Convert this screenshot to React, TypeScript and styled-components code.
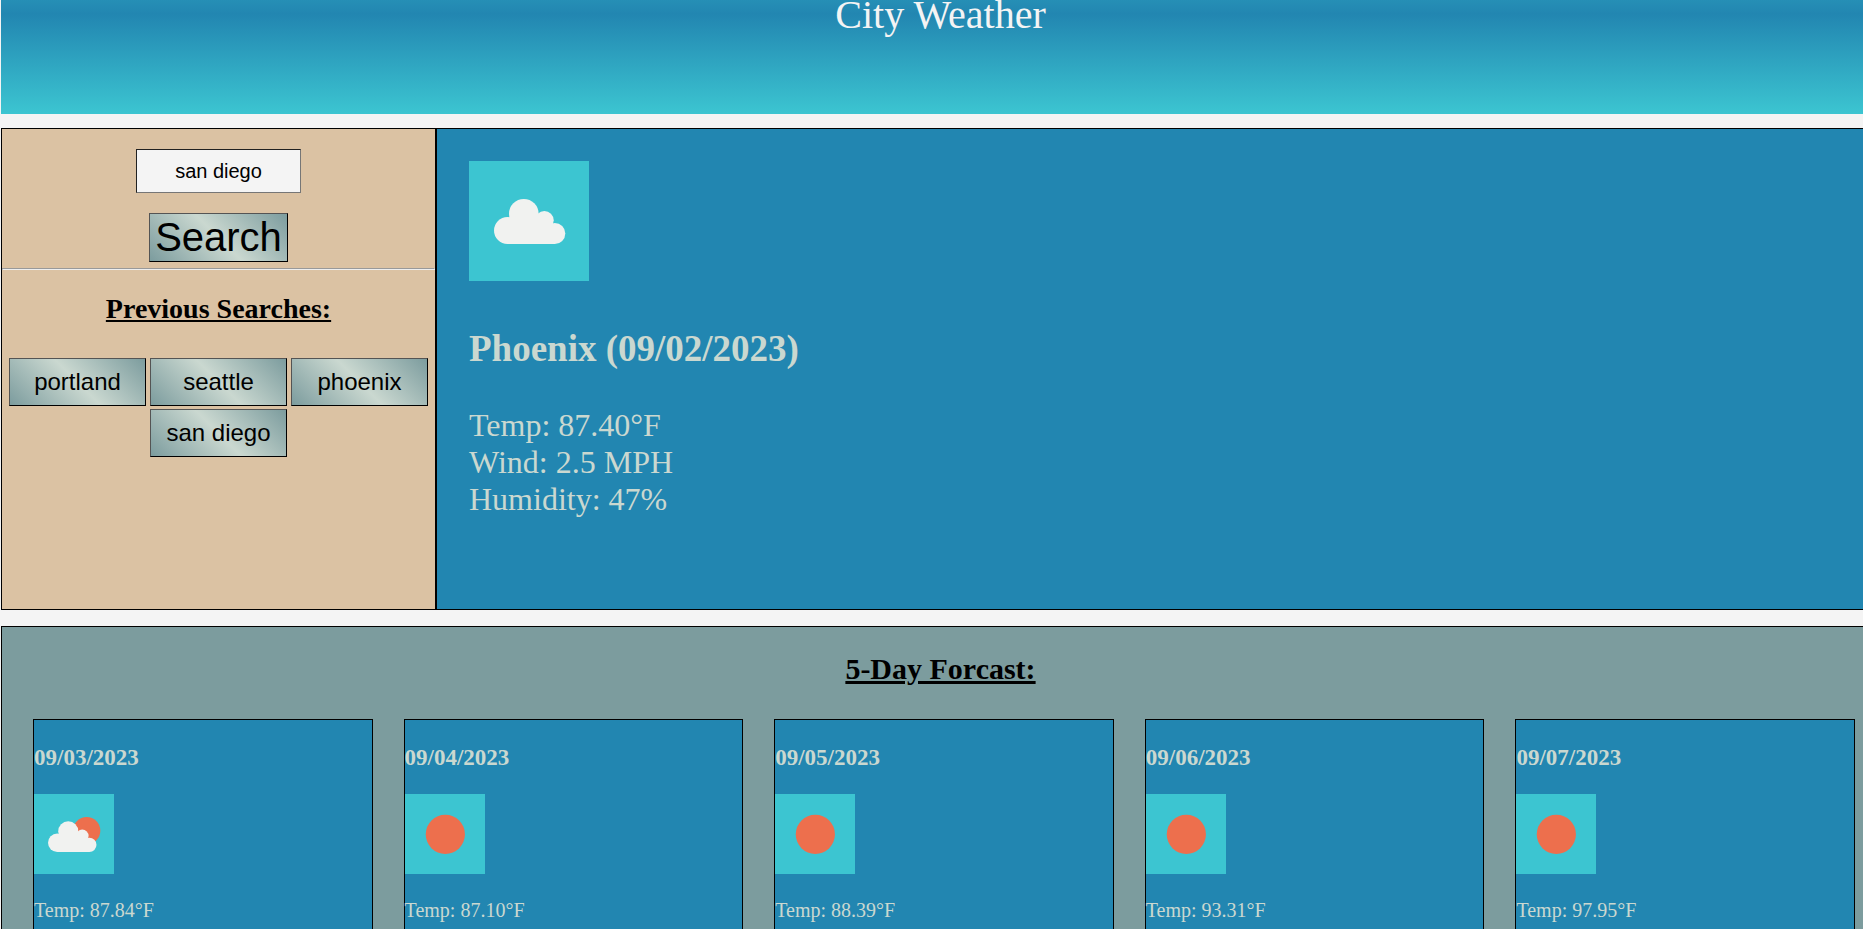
import React, { useState } from "react";
import styled, { createGlobalStyle } from "styled-components";

const color = {
  paper: "#f4f4f4",
  blue: "#2286b1",
  teal: "#3cc5d1",
  sand: "#dbc2a3",
  sage: "#7c9c9e",
  mist: "#cad8d0",
  sun: "#ed6f4d",
  cloud: "#f1f2f0",
};

const GlobalStyle = createGlobalStyle`
  body {
    margin: 0;
    background: ${color.paper};
    font-family: "Liberation Serif", "Times New Roman", serif;
  }
  *, *::before, *::after { box-sizing: border-box; }
`;

const Page = styled.div`
  height: 100vh;
  overflow: hidden;
  padding-left: 1px;
`;

/* The content is a little wider than the window. */
const Content = styled.div`
  margin-right: -17px;
  display: flex;
  flex-direction: column;
`;

const Banner = styled.header`
  display: flex;
  align-items: center;
  justify-content: center;
  height: 200px;
  margin: -86px 0 14px;
  background: linear-gradient(${color.teal}, ${color.blue}, ${color.teal});
`;

const SiteTitle = styled.h1`
  margin: 0;
  padding-top: 2px;
  font-size: 40px;
  font-weight: 400;
  line-height: 46px;
  color: ${color.paper};
`;

const Columns = styled.div`
  display: flex;
  min-height: 482px;
`;

const Sidebar = styled.aside`
  flex: 0 0 435px;
  border: 1px solid #000;
  background: ${color.sand};
`;

const SearchForm = styled.form`
  display: flex;
  flex-direction: column;
  align-items: center;
  gap: 20px;
  padding: 20px 0 6px;
`;

const CityInput = styled.input`
  width: 165px;
  height: 44px;
  padding: 0;
  border: 1px inset #767676;
  background: ${color.paper};
  font: 20px "Liberation Sans", Arial, sans-serif;
  color: #000;
  text-align: center;
`;

const Button = styled.button<{ $large?: boolean }>`
  width: ${(p) => (p.$large ? "139px" : "137px")};
  height: ${(p) => (p.$large ? 49 : 48)}px;
  padding: 0;
  border: 1px outset #000;
  background: linear-gradient(45deg, ${color.sage}, ${color.mist}, ${color.sage});
  font: ${(p) => (p.$large ? 40 : 24)}px "Liberation Sans", Arial, sans-serif;
  color: #000;
`;

const Divider = styled.hr`
  margin: 0;
  border: 1px solid;
  border-color: #999 #eee #eee #999;
`;

const SectionTitle = styled.h2<{ $size: number }>`
  margin: ${(p) => (p.$size === 28 ? "23px 0 33px" : "25px 0 33px")};
  font-size: ${(p) => p.$size}px;
  line-height: ${(p) => p.$size + 4}px;
  text-align: center;
  text-decoration: underline;
`;

const History = styled.div`
  display: flex;
  flex-wrap: wrap;
  justify-content: center;
  gap: 3px 4px;
`;

const Current = styled.main`
  flex: 1;
  padding: 32px;
  border: 1px solid #000;
  background: ${color.blue};
  color: ${color.mist};
`;

const Tile = styled.svg<{ $size: number }>`
  display: block;
  width: ${(p) => p.$size}px;
  height: ${(p) => p.$size}px;
  background: ${color.teal};
`;

const CurrentTitle = styled.h3`
  margin: 47px 0 37px;
  font-size: 37px;
  line-height: 42px;
`;

const Reading = styled.div`
  font-size: 32px;
  line-height: 37px;
`;

const Forecast = styled.section`
  display: flow-root;
  min-height: 400px;
  margin-top: 16px;
  border: 1px solid #000;
  background: ${color.sage};
`;

const Days = styled.div`
  display: flex;
  gap: 31px;
  padding: 0 24px 0 31px;
`;

const Day = styled.article`
  flex: 1;
  min-height: 300px;
  border: 1px solid #000;
  background: ${color.blue};
  color: ${color.mist};
`;

const DayDate = styled.h3`
  margin: 25px 0 23px;
  font-size: 23px;
  line-height: 26px;
`;

const DayReading = styled.p`
  margin: 25px 0;
  font-size: 20px;
  line-height: 23px;
`;

type Sky = "cloud" | "partly" | "sun";

const CloudShape = () => (
  <g fill={color.cloud}>
    <circle cx="38.5" cy="69.5" r="13.5" />
    <circle cx="54.8" cy="52.8" r="14.8" />
    <circle cx="75.4" cy="59.3" r="9.3" />
    <circle cx="85.8" cy="72.5" r="10.5" />
    <path d="M38.5 83V60L54 52L75 59L86 70V83Z" />
  </g>
);

const WeatherIcon = ({ sky, size }: { sky: Sky; size: number }) => (
  <Tile $size={size} viewBox="0 0 120 120" role="img" aria-label={sky}>
    {sky === "sun" && <circle cx="60.5" cy="60.5" r="29.4" fill={color.sun} />}
    {sky === "partly" && <circle cx="79" cy="55" r="20.5" fill={color.sun} />}
    {sky === "cloud" && <CloudShape />}
    {sky === "partly" && (
      <g transform="translate(-4.5 2.3) scale(1.02)">
        <CloudShape />
      </g>
    )}
  </Tile>
);

const cities = ["portland", "seattle", "phoenix", "san diego"];

const days: { date: string; sky: Sky; temp: string }[] = [
  { date: "09/03/2023", sky: "partly", temp: "87.84" },
  { date: "09/04/2023", sky: "sun", temp: "87.10" },
  { date: "09/05/2023", sky: "sun", temp: "88.39" },
  { date: "09/06/2023", sky: "sun", temp: "93.31" },
  { date: "09/07/2023", sky: "sun", temp: "97.95" },
];

export default function App() {
  const [city, setCity] = useState("san diego");
  return (
    <Page>
      <GlobalStyle />
      <Content>
        <Banner>
          <SiteTitle>City Weather</SiteTitle>
        </Banner>
        <Columns>
          <Sidebar>
            <SearchForm onSubmit={(e) => e.preventDefault()}>
              <CityInput
                aria-label="City"
                value={city}
                onChange={(e) => setCity(e.target.value)}
              />
              <Button $large type="submit">Search</Button>
            </SearchForm>
            <Divider />
            <SectionTitle $size={28}>Previous Searches:</SectionTitle>
            <History>
              {cities.map((name) => (
                <Button key={name} type="button" onClick={() => setCity(name)}>
                  {name}
                </Button>
              ))}
            </History>
          </Sidebar>
          <Current>
            <WeatherIcon sky="cloud" size={120} />
            <CurrentTitle>Phoenix (09/02/2023)</CurrentTitle>
            <Reading>Temp: 87.40°F</Reading>
            <Reading>Wind: 2.5 MPH</Reading>
            <Reading>Humidity: 47%</Reading>
          </Current>
        </Columns>
        <Forecast>
          <SectionTitle $size={30}>5-Day Forcast:</SectionTitle>
          <Days>
            {days.map((day) => (
              <Day key={day.date}>
                <DayDate>{day.date}</DayDate>
                <WeatherIcon sky={day.sky} size={80} />
                <DayReading>Temp: {day.temp}°F</DayReading>
              </Day>
            ))}
          </Days>
        </Forecast>
      </Content>
    </Page>
  );
}
